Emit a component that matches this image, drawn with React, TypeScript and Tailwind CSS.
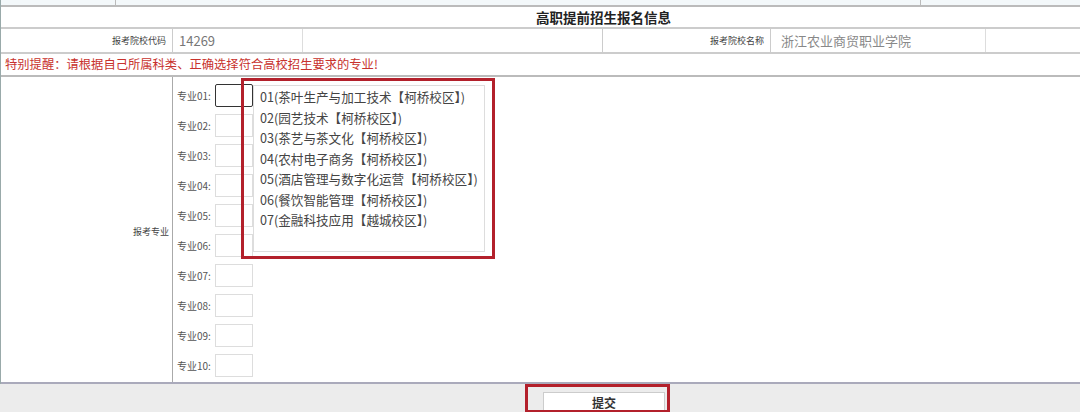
import React from 'react'

const FONT = "font-['Microsoft_YaHei','Noto_Sans_CJK_SC',sans-serif]"

const OPTIONS = [
  '01(茶叶生产与加工技术【柯桥校区】)',
  '02(园艺技术【柯桥校区】)',
  '03(茶艺与茶文化【柯桥校区】)',
  '04(农村电子商务【柯桥校区】)',
  '05(酒店管理与数字化运营【柯桥校区】)',
  '06(餐饮智能管理【柯桥校区】)',
  '07(金融科技应用【越城校区】)',
]

const SLOTS = ['01', '02', '03', '04', '05', '06', '07', '08', '09', '10']

function MajorSlot({ no, active }: { no: string; active?: boolean }) {
  return (
    <div className="flex h-[30px] items-center">
      <span className="w-[38px] text-[10px] text-[#555]">专业{no}:</span>
      <div
        className={
          active
            ? 'h-[23px] w-[38px] rounded-[2px] border border-[#333] bg-white'
            : 'h-[23px] w-[38px] border border-[#ddd] bg-white'
        }
      />
    </div>
  )
}

export default function App() {
  return (
    <div className={`${FONT} h-[412px] w-[1080px] overflow-hidden bg-[#ececec] text-[#333]`}>
      <div className="border-l border-[#9aa] bg-white">
        {/* cut-off row above */}
        <div className="flex h-[7px] border-b-2 border-[#bbb] bg-[#f3f8fa]">
          <div className="w-[115px] border-r border-[#bbb]" />
          <div className="w-[805px] border-r border-[#bbb]" />
          <div className="flex-1" />
        </div>

        {/* title */}
        <div className="flex h-[22px] items-center border-b-2 border-[#ccc] pl-[535px]">
          <span className="text-[13.5px] font-bold text-[#222]">高职提前招生报名信息</span>
        </div>

        {/* school row */}
        <div className="flex h-[25px] border-b-2 border-[#ccc]">
          <div className="flex w-[172px] items-center justify-end border-r border-[#ccc] pr-[6px] text-[9px] text-[#444]">
            报考院校代码
          </div>
          <div className="flex w-[130px] items-center border-r border-[#ddd] pl-[6px] text-[13px] text-[#777]">
            14269
          </div>
          <div className="w-[300px] border-r border-[#ccc]" />
          <div className="flex w-[168px] items-center justify-end border-r border-[#ccc] pr-[6px] text-[9px] text-[#444]">
            报考院校名称
          </div>
          <div className="flex w-[215px] items-center border-r border-[#ddd] pl-[10px] text-[13px] text-[#888]">
            浙江农业商贸职业学院
          </div>
          <div className="flex-1" />
        </div>

        {/* notice */}
        <div className="flex h-[23px] items-center border-b-2 border-[#bbb] pl-[4px] text-[12.3px] text-[#c8322d]">
          特别提醒：请根据自己所属科类、正确选择符合高校招生要求的专业!
        </div>

        {/* majors */}
        <div className="flex h-[307px] border-b-2 border-[#aab]">
          <div className="flex w-[172px] items-center justify-end border-r border-[#aaa] pr-[3px] text-[9px] text-[#444]">
            <span className="mt-[4px]">报考专业</span>
          </div>
          <div className="relative flex-1 pl-[4px] pt-[3px]">
            <div className="flex flex-col">
              {SLOTS.map((no, i) => (
                <MajorSlot key={no} no={no} active={i === 0} />
              ))}
            </div>

            {/* dropdown list */}
            <div className="absolute left-[80px] top-[8px] h-[167px] w-[232px] border border-[#ddd] bg-white pl-[6px] pt-[1px]">
              {OPTIONS.map((o) => (
                <div key={o} className="h-[20.5px] text-[12.6px] leading-[20px] text-[#444]">
                  {o}
                </div>
              ))}
            </div>
            <div className="absolute left-[68px] top-[1px] h-[181px] w-[254px] border-[3px] border-[#b3202b]" />
          </div>
        </div>
      </div>

      {/* submit */}
      <div className="relative flex h-[29px] justify-center pl-[128px]">
        <div className="mt-[8px] flex h-[21px] w-[122px] items-center justify-center border border-[#ccc] bg-white text-[12px] font-bold text-[#333]">
          提交
        </div>
        <div className="absolute left-[525px] top-0 h-[29px] w-[145px] border-[3px] border-[#b3202b]" />
      </div>
    </div>
  )
}
